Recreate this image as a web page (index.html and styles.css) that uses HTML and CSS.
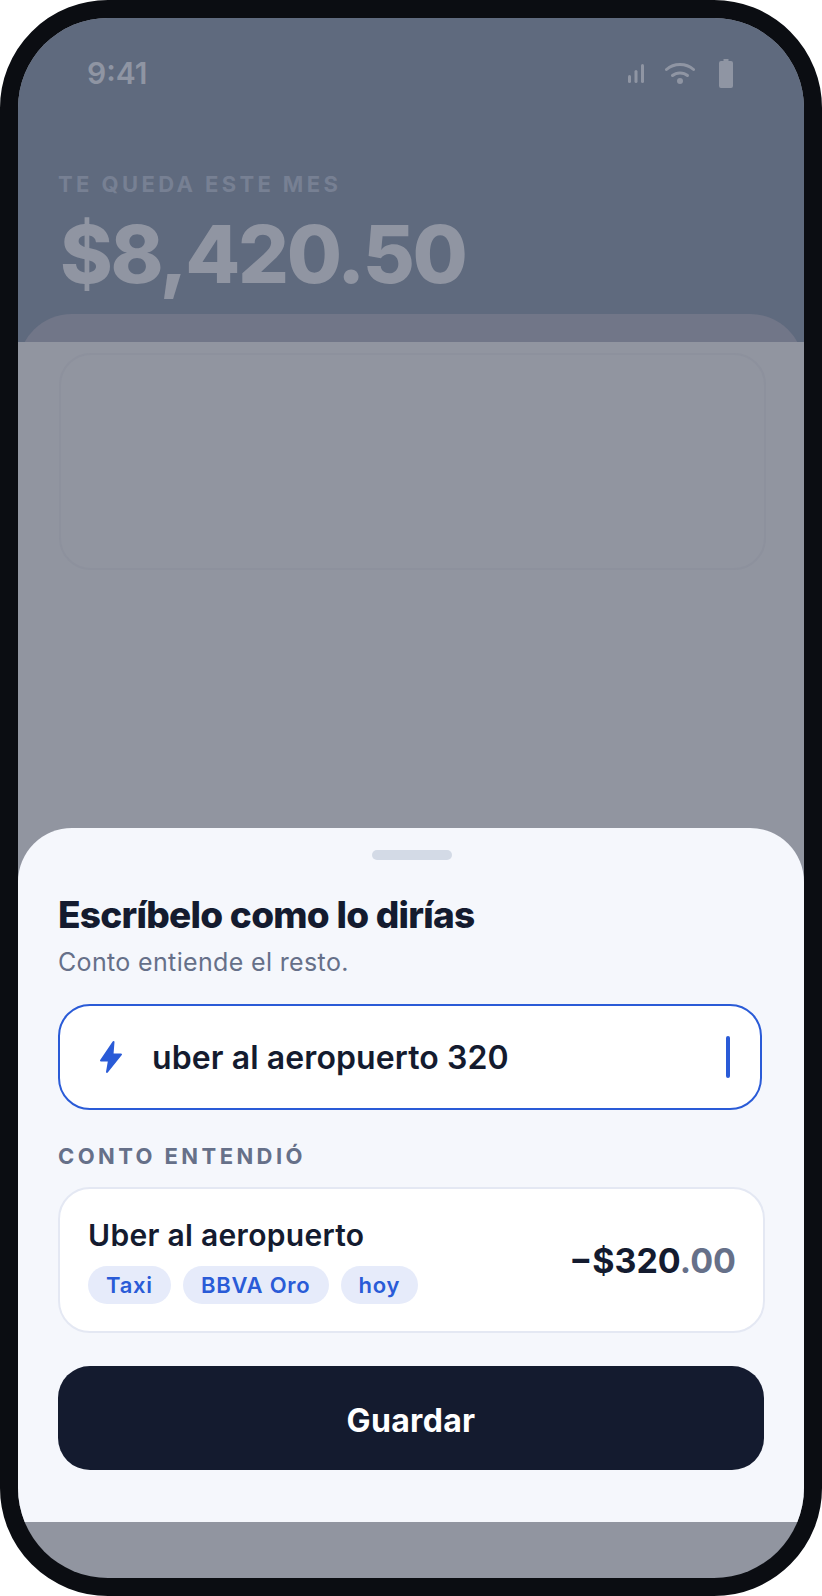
FILE: index.html
```html
<!DOCTYPE html>
<html lang="es">
<head>
    <meta charset="UTF-8">
    <meta name="viewport" content="width=device-width, initial-scale=1.0">
    <title>Conto - Escríbelo como lo dirías</title>
    <link rel="stylesheet" href="styles.css">
</head>
<body>
    <div class="phone">
        <div class="screen">
            <div class="hero">
                <div class="status-bar">
                    <span class="time">9:41</span>
                    <div class="status-icons">
                        <svg class="icon-signal" width="16" height="19" viewBox="0 0 16 19">
                            <rect x="0" y="11" width="3" height="8" rx="1.5"/>
                            <rect x="6.5" y="6" width="3" height="13" rx="1.5"/>
                            <rect x="13" y="0" width="3" height="19" rx="1.5"/>
                        </svg>
                        <svg class="icon-wifi" width="30" height="22" viewBox="0 0 30 22">
                            <path d="M1.5 7.5C9 .8 21 .8 28.500 7.500" fill="none" stroke-width="3" stroke-linecap="round"/>
                            <path d="M7.500 13.500C11.500 10 18.500 10 22.500 13.500" fill="none" stroke-width="3" stroke-linecap="round"/>
                            <circle cx="15" cy="19" r="3"/>
                        </svg>
                        <svg class="icon-battery" width="14" height="29" viewBox="0 0 14 29">
                            <path d="M4.500 0h5v2H12a2 2 0 0 1 2 2v23a2 2 0 0 1-2 2H2a2 2 0 0 1-2-2V4a2 2 0 0 1 2-2h2.500z"/>
                        </svg>
                    </div>
                </div>
                <div class="hero-label">TE QUEDA ESTE MES</div>
                <div class="hero-amount">$8,420.50</div>
                <div class="panel"></div>
            </div>

            <div class="backdrop">
                <div class="ghost-card"></div>

                <div class="sheet">
                    <div class="handle"></div>
                    <h1 class="sheet-title">Escríbelo como lo dirías</h1>
                    <p class="sheet-sub">Conto entiende el resto.</p>

                    <div class="input-box">
                        <svg class="icon-bolt" width="24" height="34" viewBox="0 0 24 34">
                            <path d="M14.500 2L2 20.500H10L8 32L22 14.500H13.500Z"/>
                        </svg>
                        <span class="input-text">uber al aeropuerto 320</span>
                        <span class="caret"></span>
                    </div>

                    <div class="section-label">CONTO ENTENDIÓ</div>

                    <div class="result-card">
                        <div class="result-info">
                            <div class="result-name">Uber al aeropuerto</div>
                            <div class="chips">
                                <span class="chip">Taxi</span>
                                <span class="chip">BBVA Oro</span>
                                <span class="chip">hoy</span>
                            </div>
                        </div>
                        <div class="result-amount">−$320<span class="cents">.00</span></div>
                    </div>

                    <button class="save-btn" type="button">Guardar</button>
                </div>
            </div>
        </div>
    </div>
</body>
</html>
```

FILE: styles.css
```css
* {
    box-sizing: border-box;
}
body {
    margin: 0;
    background: #fff;
    font-family: Inter, "Noto Sans", sans-serif;
}
.phone {
    width: 822px;
    height: 1596px;
    border: 18px solid #0b0d12;
    border-radius: 108px;
    background: #0b0d12;
}
.screen {
    display: flex;
    flex-direction: column;
    height: 100%;
    border-radius: 90px;
    overflow: hidden;
    background: #9195a0;
}
.hero {
    flex: none;
    height: 324px;
    overflow: hidden;
    background: #5f6a7e;
}
.status-bar {
    display: flex;
    justify-content: space-between;
    align-items: center;
    height: 110px;
    padding: 0 71px 0 69px;
}
.time {
    font-size: 30px;
    font-weight: 600;
    color: #8f95a3;
}
.status-icons {
    display: flex;
    align-items: center;
    gap: 21px;
    fill: #8f95a3;
    stroke: none;
}
.icon-wifi path {
    stroke: #8f95a3;
}
.icon-battery {
    margin-left: 3px;
}
.hero-label {
    margin: 42px 0 0 40px;
    font-size: 22px;
    line-height: 28px;
    font-weight: 700;
    letter-spacing: 0.154em;
    color: #778093;
}
.hero-amount {
    margin: 12px 0 0 42px;
    font-size: 80px;
    line-height: 88px;
    font-weight: 800;
    letter-spacing: -0.03em;
    color: #9095a2;
}
.panel {
    height: 80px;
    margin-top: 16px;
    border-radius: 54px 54px 0 0;
    background: #717688;
}
.backdrop {
    flex: 1;
    display: flex;
    flex-direction: column;
    padding-bottom: 56px;
}
.ghost-card {
    height: 217px;
    margin: 11px 38px 0 41px;
    border: 2px solid #8d919d;
    border-radius: 32px;
    background: #9195a0;
}
.sheet {
    height: 694px;
    margin-top: auto;
    padding: 22px 40px 0;
    border-radius: 54px 54px 0 0;
    background: #f5f7fc;
}
.handle {
    width: 80px;
    height: 10px;
    margin-left: 314px;
    border-radius: 5px;
    background: #d3dae6;
}
.sheet-title {
    margin: 32px 0 0;
    font-size: 37px;
    line-height: 46px;
    font-weight: 800;
    letter-spacing: -0.02em;
    color: #141b2f;
}
.sheet-sub {
    margin: 8px 0 0;
    font-size: 25px;
    line-height: 32px;
    letter-spacing: 0.014em;
    color: #667089;
}
.input-box {
    display: flex;
    align-items: center;
    width: 704px;
    height: 106px;
    margin-top: 26px;
    padding: 0 30px 0 39px;
    border: 2px solid #2a5bd7;
    border-radius: 32px;
    background: #fff;
}
.icon-bolt {
    flex: none;
    fill: #2a5bd7;
    stroke: #2a5bd7;
    stroke-width: 2;
    stroke-linejoin: round;
}
.input-text {
    flex: 1;
    margin-left: 29px;
    font-size: 32px;
    font-weight: 600;
    letter-spacing: 0.003em;
    color: #141b2f;
}
.caret {
    width: 4px;
    height: 42px;
    border-radius: 2px;
    background: #2a5bd7;
}
.section-label {
    margin-top: 32px;
    font-size: 22px;
    line-height: 28px;
    font-weight: 700;
    letter-spacing: 0.155em;
    color: #667089;
}
.result-card {
    display: flex;
    justify-content: space-between;
    align-items: center;
    height: 146px;
    margin: 17px -1px 0 0;
    padding: 0 27px 0 28px;
    border: 2px solid #e4e8f3;
    border-radius: 32px;
    background: #fff;
}
.result-name {
    font-size: 30px;
    line-height: 38px;
    font-weight: 600;
    letter-spacing: 0.01em;
    color: #141b2f;
}
.chips {
    display: flex;
    gap: 12px;
    margin-top: 12px;
}
.chip {
    height: 38px;
    padding: 0 18px;
    border-radius: 19px;
    font-size: 22px;
    line-height: 38px;
    font-weight: 600;
    letter-spacing: 0.035em;
    color: #2a5bd7;
    background: #e6ebfa;
}
.result-amount {
    font-size: 34px;
    font-weight: 700;
    color: #141b2f;
}
.cents {
    color: #667089;
}
.save-btn {
    display: block;
    width: 100%;
    height: 104px;
    margin-top: 33px;
    padding: 4px 0 0;
    border: none;
    border-radius: 32px;
    font-family: inherit;
    font-size: 32px;
    font-weight: 700;
    letter-spacing: 0.01em;
    color: #fff;
    background: #141b2f;
    cursor: pointer;
}
```
